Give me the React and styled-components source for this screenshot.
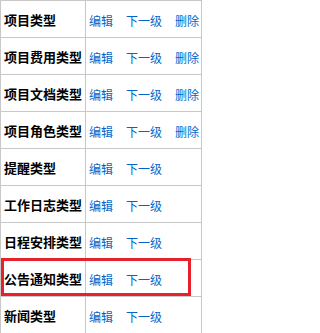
import React from 'react';
import styled, { createGlobalStyle } from 'styled-components';

const GlobalStyle = createGlobalStyle`
  body {
    margin: 0;
    background: #ffffff;
    font-family: "Noto Sans CJK SC", "Liberation Sans", sans-serif;
  }
`

const Wrapper = styled.div`
  position: relative;
  width: 202px;
`

const Table = styled.table`
  width: 202px;
  border-collapse: collapse;
  table-layout: fixed;
`

const Row = styled.tr`
  height: 37px;
`

const NameCell = styled.td`
  width: 81px;
  border: 1px solid #c8c8c8;
  padding: 0 0 0 3px;
  font-size: 13px;
  font-weight: bold;
  color: #000;
  white-space: nowrap;
  overflow: hidden;
  vertical-align: middle;
`

const ActionCell = styled.td`
  border: 1px solid #c8c8c8;
  padding: 0 0 0 3px;
  white-space: nowrap;
  vertical-align: middle;
`

const Link = styled.a`
  font-size: 12px;
  color: #0066cc;
  text-decoration: none;
  margin-right: 13px;
  cursor: pointer;
  &:last-child {
    margin-right: 0;
  }
`

const Highlight = styled.div`
  position: absolute;
  left: 1px;
  top: ${props => props.top}px;
  width: 190px;
  height: 38px;
  box-sizing: border-box;
  border: 3px solid #e8202a;
  pointer-events: none;
`

const rows = [
    { name: '项目类型', del: true },
    { name: '项目费用类型', del: true },
    { name: '项目文档类型', del: true },
    { name: '项目角色类型', del: true },
    { name: '提醒类型' },
    { name: '工作日志类型' },
    { name: '日程安排类型' },
    { name: '公告通知类型', marked: true },
    { name: '新闻类型' },
]

export default function App() {
    return (
        <Wrapper>
            <GlobalStyle />
            <Table>
                <tbody>
                    {rows.map(r => (
                        <Row key={r.name}>
                            <NameCell>{r.name}</NameCell>
                            <ActionCell>
                                <Link>编辑</Link>
                                <Link>下一级</Link>
                                {r.del && <Link>删除</Link>}
                            </ActionCell>
                        </Row>
                    ))}
                </tbody>
            </Table>
            <Highlight top={258} />
        </Wrapper>
    )
}
